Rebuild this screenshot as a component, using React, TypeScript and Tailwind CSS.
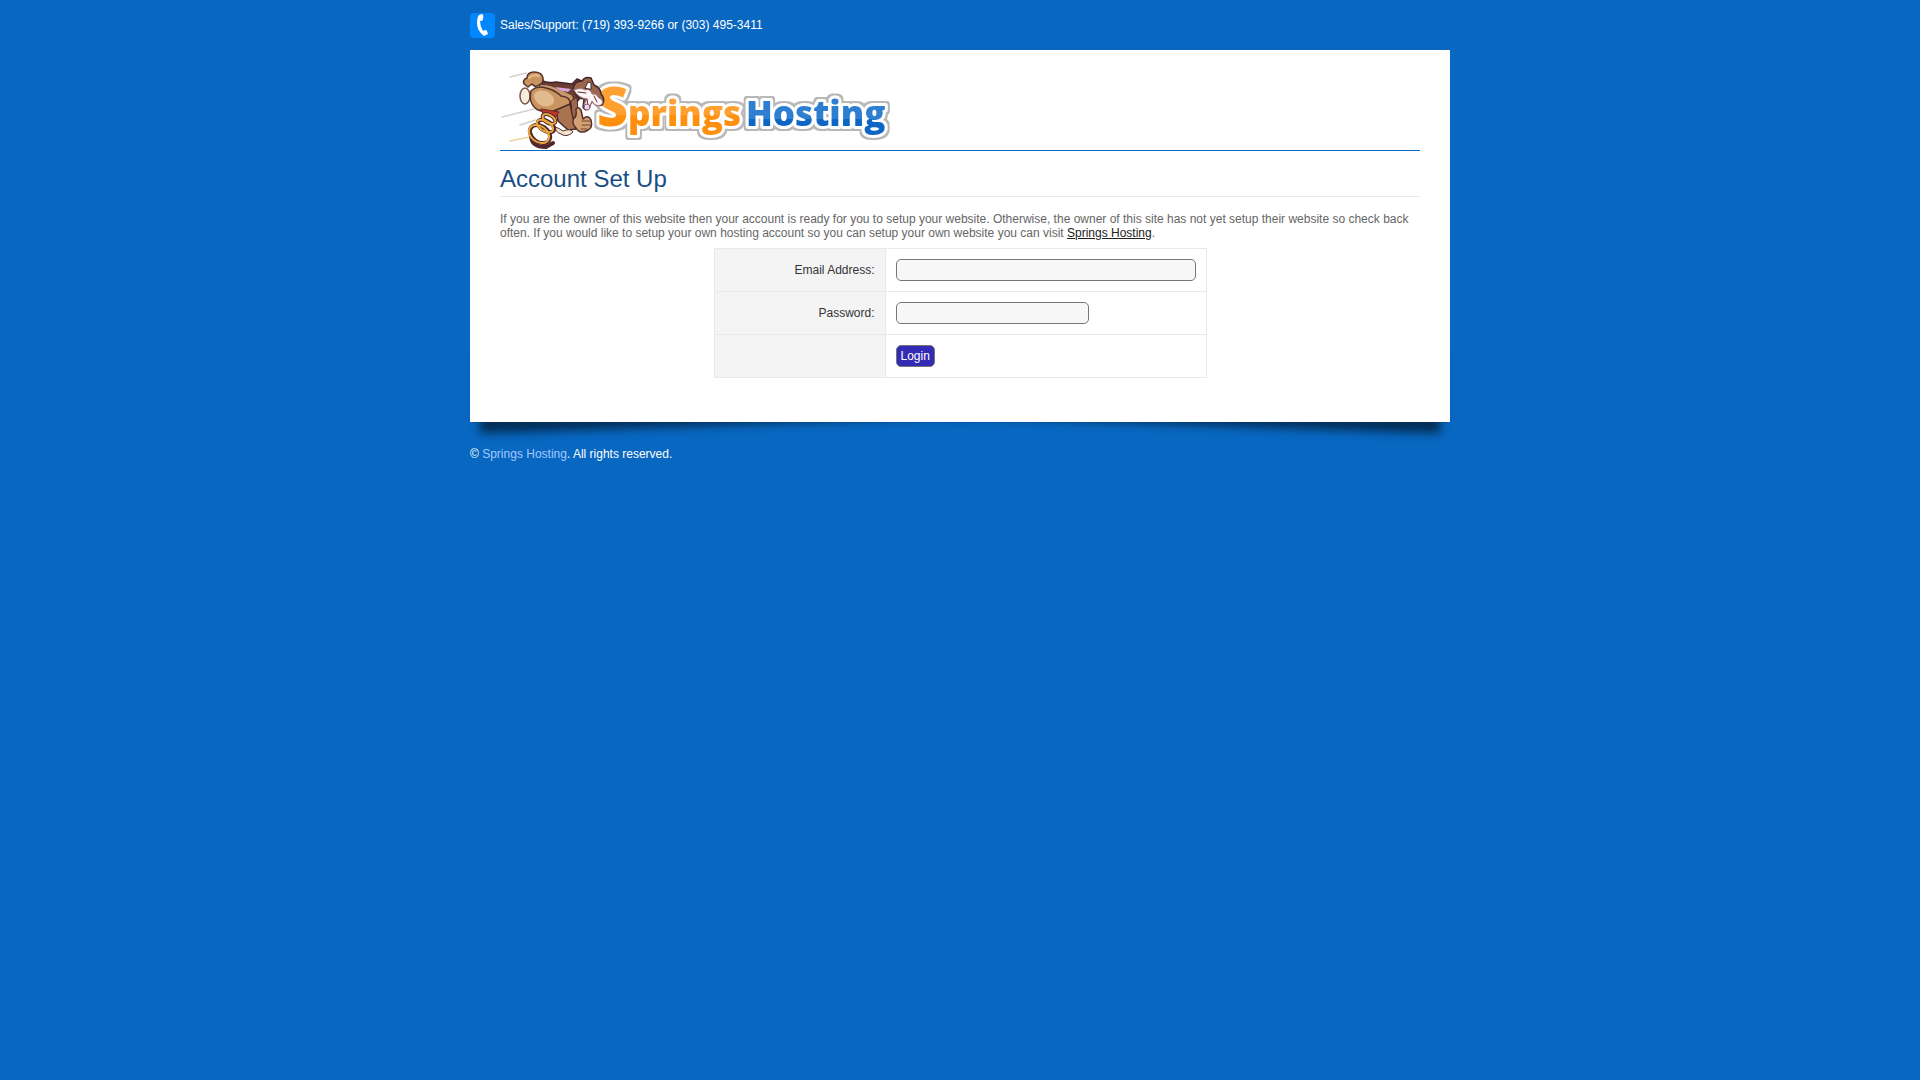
function Mascot() {
  return (
    <g strokeLinejoin="round" strokeLinecap="round">
      <g fill="none" stroke="#d3cfcb" strokeWidth="1.5">
        <path d="M10 7 L26 3 M2 47 L34 39 M20 55 L36 50" />
        <path d="M10 71 L30 67" stroke="#f0cf9a" />
      </g>
      <ellipse cx="25" cy="26" rx="5" ry="8" fill="#f6eddc" stroke="#7a5648" strokeWidth="1.5" />
      <path d="M41 9 Q45 14 56 12 L72 14 L77 9 L84 12 L80 28 L72 38 L68 33 L56 22 L42 17Z" fill="#6b3c30" stroke="#3f2228" strokeWidth="1.5" />
      <path d="M40 14 Q50 14 60 19 L72 25 Q75 29 71 32 Q62 30 54 26 L40 19Z" fill="#c9996d" stroke="#55302a" />
      <path d="M55 17 L71 19 L68 22 Q60 21 55 17Z" fill="#dba8e0" />
      <path d="M24 14 Q22 10 27 8 Q27 2 34 2 Q42 2 43 8 Q44 13 39 15 Q35 18 32 14 L28 17Z" fill="#c9935f" stroke="#55302a" strokeWidth="1.5" />
      <path d="M29 8 Q33 4 39 6" fill="none" stroke="#e6bd8c" strokeWidth="2" />
      <path d="M31 21 Q37 15 46 18 Q55 20 61 26 Q71 27 70 34 Q66 41 56 40 Q48 44 38 40 Q28 34 31 21Z" fill="#c9945f" stroke="#55302a" strokeWidth="1.5" />
      <path d="M34 24 Q39 18 48 22 Q57 28 53 34 Q46 39 39 34 Q34 31 34 24Z" fill="#e2ba8e" />
      <path d="M56 40 Q63 37 70 34 L73 47 L76 59 L68 60 L58 51Z" fill="#a97350" stroke="#4b2b2b" strokeWidth="1.5" />
      <path d="M71 31 L77 27 L78 42 L73 48Z" fill="#9c674b" stroke="#4b2b2b" />
      <path d="M55 57 Q59 58 63 61 Q71 58 73 62 Q67 68 61 64 Q55 62 55 57Z" fill="#f3e3cf" stroke="#55302a" />
      <path d="M74 48 Q77 47 76 39 Q78 36 81 40 L83 49 Q88 44 91 50 Q93 58 88 60 Q80 65 76 58 Q71 53 74 48Z" fill="#d3a073" stroke="#55302a" strokeWidth="1.5" />
      <path d="M82 51 L90 51 M82 55 L90 55 M81 59 L87 59" fill="none" stroke="#75452f" />
      <path d="M73 18 Q75 11 82 11 Q85 6 91 8 L94 15 Q101 18 101 24 Q106 29 102 35 Q96 37 92 31 L89 38 Q85 42 83 37 L84 29 Q76 29 73 18Z" fill="#9b674c" stroke="#44262a" strokeWidth="1.5" />
      <path d="M74 20 Q81 17 85 20 Q90 18 92 24 Q96 23 99 28 Q105 31 101 35 Q95 37 92 31 L89 38 Q85 40 84 35 L87 29 Q78 28 74 20Z" fill="#fff7f4" stroke="#a3798a" />
      <path d="M85 18 L88 12 L91 13 L91 19Z" fill="#fff" stroke="#44262a" />
      <path d="M78 22 L86 23 M87 29 L88 35 M94 26 L97 32" fill="none" stroke="#5d303e" />
      <circle cx="87" cy="37" r="3" fill="#f3d8ec" stroke="#80576e" />
      <path d="M41 39 L59 42 L56 47 L44 45Z" fill="#c23626" stroke="#6b2824" />
      <g fill="none">
        <g stroke="#53272b" strokeWidth="4">
          <ellipse cx="49" cy="49" rx="7" ry="4" transform="rotate(30 49 49)" />
          <ellipse cx="46" cy="56" rx="9" ry="5" transform="rotate(30 46 56)" />
          <ellipse cx="40" cy="64" rx="11" ry="8" transform="rotate(35 40 64)" />
          <path d="M31 65 Q31 77 46 77 L53 73" />
        </g>
        <g stroke="#e9a73d" strokeWidth="2">
          <ellipse cx="49" cy="49" rx="7" ry="4" transform="rotate(30 49 49)" />
          <ellipse cx="45" cy="56" rx="9" ry="5" transform="rotate(30 45 56)" />
          <ellipse cx="39" cy="64" rx="11" ry="8" transform="rotate(35 39 64)" />
        </g>
      </g>
    </g>
  );
}

function Logo() {
  return (
    <svg role="img" aria-label="Springs Hosting" width="400" height="80" viewBox="0 0 400 80" className="block">
      <defs>
        <linearGradient id="orange" gradientUnits="userSpaceOnUse" x1="0" y1="0" x2="0" y2="80">
          <stop offset="0.56" stopColor="#ffa033" />
          <stop offset="0.57" stopColor="#ff9010" />
        </linearGradient>
        <linearGradient id="blue" gradientUnits="userSpaceOnUse" x1="0" y1="0" x2="0" y2="80">
          <stop offset="0.61" stopColor="#2e7fd2" />
          <stop offset="0.62" stopColor="#0b66c6" />
        </linearGradient>
        <filter id="outline" x="-10%" y="-30%" width="120%" height="160%">
          <feMorphology in="SourceAlpha" operator="dilate" radius="2" result="wide" />
          <feGaussianBlur in="wide" stdDeviation="0.6" result="soft" />
          <feFlood floodColor="#b8b8b8" />
          <feComposite in2="soft" operator="in" result="edge" />
          <feMerge>
            <feMergeNode in="edge" />
            <feMergeNode in="SourceGraphic" />
          </feMerge>
        </filter>
      </defs>
      <g
        filter="url(#outline)"
        fontFamily="'Open Sans', sans-serif"
        fontWeight="800"
        stroke="#fff"
        strokeWidth="6"
        strokeLinejoin="round"
        paintOrder="stroke"
      >
        <text x="97" y="56" fontSize="54" fill="url(#orange)">S</text>
        <text x="128" y="56" fontSize="35" fill="url(#orange)">prings</text>
        <text x="246" y="56" fontSize="35" fill="url(#blue)">Hosting</text>
      </g>
      <Mascot />
    </svg>
  );
}

function PhoneIcon() {
  return (
    <svg aria-hidden="true" width="25" height="25" viewBox="0 0 25 25" className="block">
      <rect width="25" height="25" rx="4" fill="#0086ff" />
      <path d="M9 2 L12 1 Q14 2 13 6 Q13 8 10 8 Q10 13 13 18 Q16 16 17 18 L18 21 L14 23 Q7 18 7 10 Q7 4 9 2Z" fill="#fff" />
    </svg>
  );
}

const th = "w-[171px] border border-[#e9e9e9] bg-[#f4f4f4] px-2.5 text-right font-normal text-[#333]";
const td = "border border-[#e9e9e9] px-2.5 py-2.5";
const field = "block h-[22px] rounded-[5px] border border-[#767676] bg-[#f7f7f7] px-1 text-[#333] outline-none";

export default function App() {
  return (
    <div className="min-h-screen bg-[#0867c1] font-[Arial,'Liberation_Sans',sans-serif] text-xs leading-[14px] text-white">
      <div className="mx-auto max-w-[980px]">
        <header className="flex h-[50px] items-center gap-[5px]">
          <PhoneIcon />
          <span>Sales/Support: (719) 393-9266 or (303) 495-3411</span>
        </header>

        <div className="relative isolate">
          <div className="absolute bottom-3 left-2 -z-10 h-[20%] w-1/2 -rotate-2 shadow-[0_15px_10px_rgba(0,0,0,0.55)]" />
          <div className="absolute right-2 bottom-3 -z-10 h-[20%] w-1/2 rotate-2 shadow-[0_15px_10px_rgba(0,0,0,0.55)]" />
          <main className="bg-white px-[30px] pt-5 pb-11 text-[#666]">
            <div className="border-b border-[#0867c1]">
              <Logo />
            </div>
            <h1 className="border-b border-[#e9e9e9] pt-3.5 pb-[3px] text-2xl leading-7 text-[#184e84]">Account Set Up</h1>
            <p className="pt-[15px] pb-2">
              If you are the owner of this website then your account is ready for you to setup your website. Otherwise, the owner of this
              site has not yet setup their website so check back often. If you would like to setup your own hosting account so you can
              setup your own website you can visit{" "}
              <a href="#" className="text-[#222] underline">Springs Hosting</a>.
            </p>
            <form onSubmit={(e) => e.preventDefault()}>
              <table className="mx-auto border-collapse">
                <tbody>
                  <tr>
                    <th scope="row" className={th}><label htmlFor="email">Email Address:</label></th>
                    <td className={td}><input id="email" type="text" className={`${field} w-[300px]`} /></td>
                  </tr>
                  <tr>
                    <th scope="row" className={th}><label htmlFor="password">Password:</label></th>
                    <td className={td}><input id="password" type="password" className={`${field} w-[193px]`} /></td>
                  </tr>
                  <tr>
                    <td className="border border-[#e9e9e9] bg-[#f4f4f4]" />
                    <td className={td}>
                      <button type="submit" className="block h-[22px] rounded-[5px] border border-[#767676] bg-[#332bb3] px-1 text-white">Login</button>
                    </td>
                  </tr>
                </tbody>
              </table>
            </form>
          </main>
        </div>

        <footer className="pt-[25px] pb-5">
          © <a href="#" className="text-[#a3c8ff]">Springs Hosting</a>. All rights reserved.
        </footer>
      </div>
    </div>
  );
}
